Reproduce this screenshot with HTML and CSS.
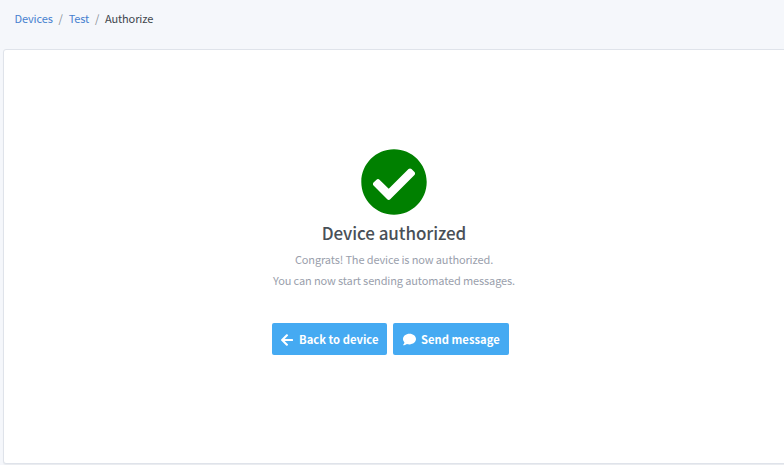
FILE: index.html
```html
<!DOCTYPE html>
<html lang="en">
<head>
<meta charset="utf-8">
<title>Authorize</title>
<link rel="stylesheet" href="styles.css">
</head>
<body>
<nav class="breadcrumb">
  <a href="#">Devices</a><span class="sep">/</span><a href="#">Test</a><span class="sep">/</span><span class="current">Authorize</span>
</nav>
<main class="card">
  <svg class="check" viewBox="8 8 496 496"><path fill="currentColor" d="M504 256c0 136.967-111.033 248-248 248S8 392.967 8 256 119.033 8 256 8s248 111.033 248 248zM227.314 387.314l184-184c6.248-6.248 6.248-16.379 0-22.627l-22.627-22.627c-6.248-6.249-16.379-6.249-22.628 0L216 308.118l-70.059-70.059c-6.248-6.248-16.379-6.248-22.628 0l-22.627 22.627c-6.248 6.248-6.248 16.379 0 22.627l104 104c6.249 6.249 16.379 6.249 22.628.001z"/></svg>
  <h1>Device authorized</h1>
  <p class="first">Congrats! The device is now authorized.</p>
  <p>You can now start sending automated messages.</p>
  <div class="actions">
    <a class="btn back" href="#"><svg class="arrow" viewBox="0 0 448 512"><path fill="currentColor" d="M257.5 445.1l-22.2 22.2c-9.4 9.4-24.6 9.4-33.9 0L7 273c-9.4-9.4-9.4-24.6 0-33.9L201.4 44.7c9.4-9.4 24.6-9.4 33.9 0l22.2 22.2c9.5 9.5 9.3 25-.4 34.3L136.6 216H424c13.3 0 24 10.7 24 24v32c0 13.3-10.7 24-24 24H136.600l120.500 114.800c9.800 9.300 10 24.800.4 34.300z"/></svg><span>Back to device</span></a>
    <a class="btn send" href="#"><svg class="bubble" viewBox="0 0 512 512"><path fill="currentColor" d="M256 32C114.600 32 0 125.100 0 240c0 49.600 21.400 95 57 130.700C44.500 421.100 2.700 466 2.200 466.500c-2.200 2.300-2.800 5.700-1.500 8.700S4.800 480 8 480c66.300 0 116-31.800 140.600-51.400 32.700 12.300 69 19.400 107.400 19.400 141.400 0 256-93.100 256-208S397.400 32 256 32z"/></svg><span>Send message</span></a>
  </div>
</main>
</body>
</html>
```
FILE: styles.css
```css
* { box-sizing: border-box; }
body {
  margin: 0;
  height: 465px;
  overflow: hidden;
  background: #f5f7fb;
  color: #495057;
  font-family: "Noto Sans CJK SC", "Noto Sans", sans-serif;
  font-size: 11px;
  letter-spacing: -0.13px;
}
a { color: #467fcf; text-decoration: none; }
.breadcrumb {
  display: flex;
  height: 49px;
  padding: 9px 0 0 14.5px;
  line-height: 18px;
}
.sep { color: #868e96; margin: 0 5.9px; }
.current { color: #40464d; }
.card {
  display: flex;
  flex-direction: column;
  align-items: center;
  width: 791px;
  height: 415px;
  margin-left: 3px;
  padding: 99px 9px 0 0;
  background: #fff;
  border: 1px solid #dfe3ea;
  box-shadow: 0 1px 1px rgba(0, 0, 0, 0.05);
  border-radius: 3px;
}
.check { width: 66px; height: 66px; padding: 0.3px; color: green; }
h1 {
  margin: 5px 0 3px;
  font-size: 17px;
  font-weight: 500;
  line-height: 26px;
  letter-spacing: -0.08px;
}
p { margin: 0; line-height: 21px; color: #9aa0ac; }
.actions { display: flex; gap: 6px; margin: 32px 7px 0 0; }
.btn {
  display: flex;
  align-items: center;
  height: 32px;
  padding-left: 9px;
  border-radius: 2px;
  background: #45aaf2;
  color: #fff;
  font-size: 11.2px;
  font-weight: 700;
  letter-spacing: 0.03px;
}
.back { width: 115px; }
.send { width: 116px; }
.btn span { margin-top: -1px; }
.arrow { width: 12px; height: 14px; margin: 1px 6px 0 0; }
.bubble { width: 13px; height: 13px; margin: 1px 5px 0 1px; }
```
